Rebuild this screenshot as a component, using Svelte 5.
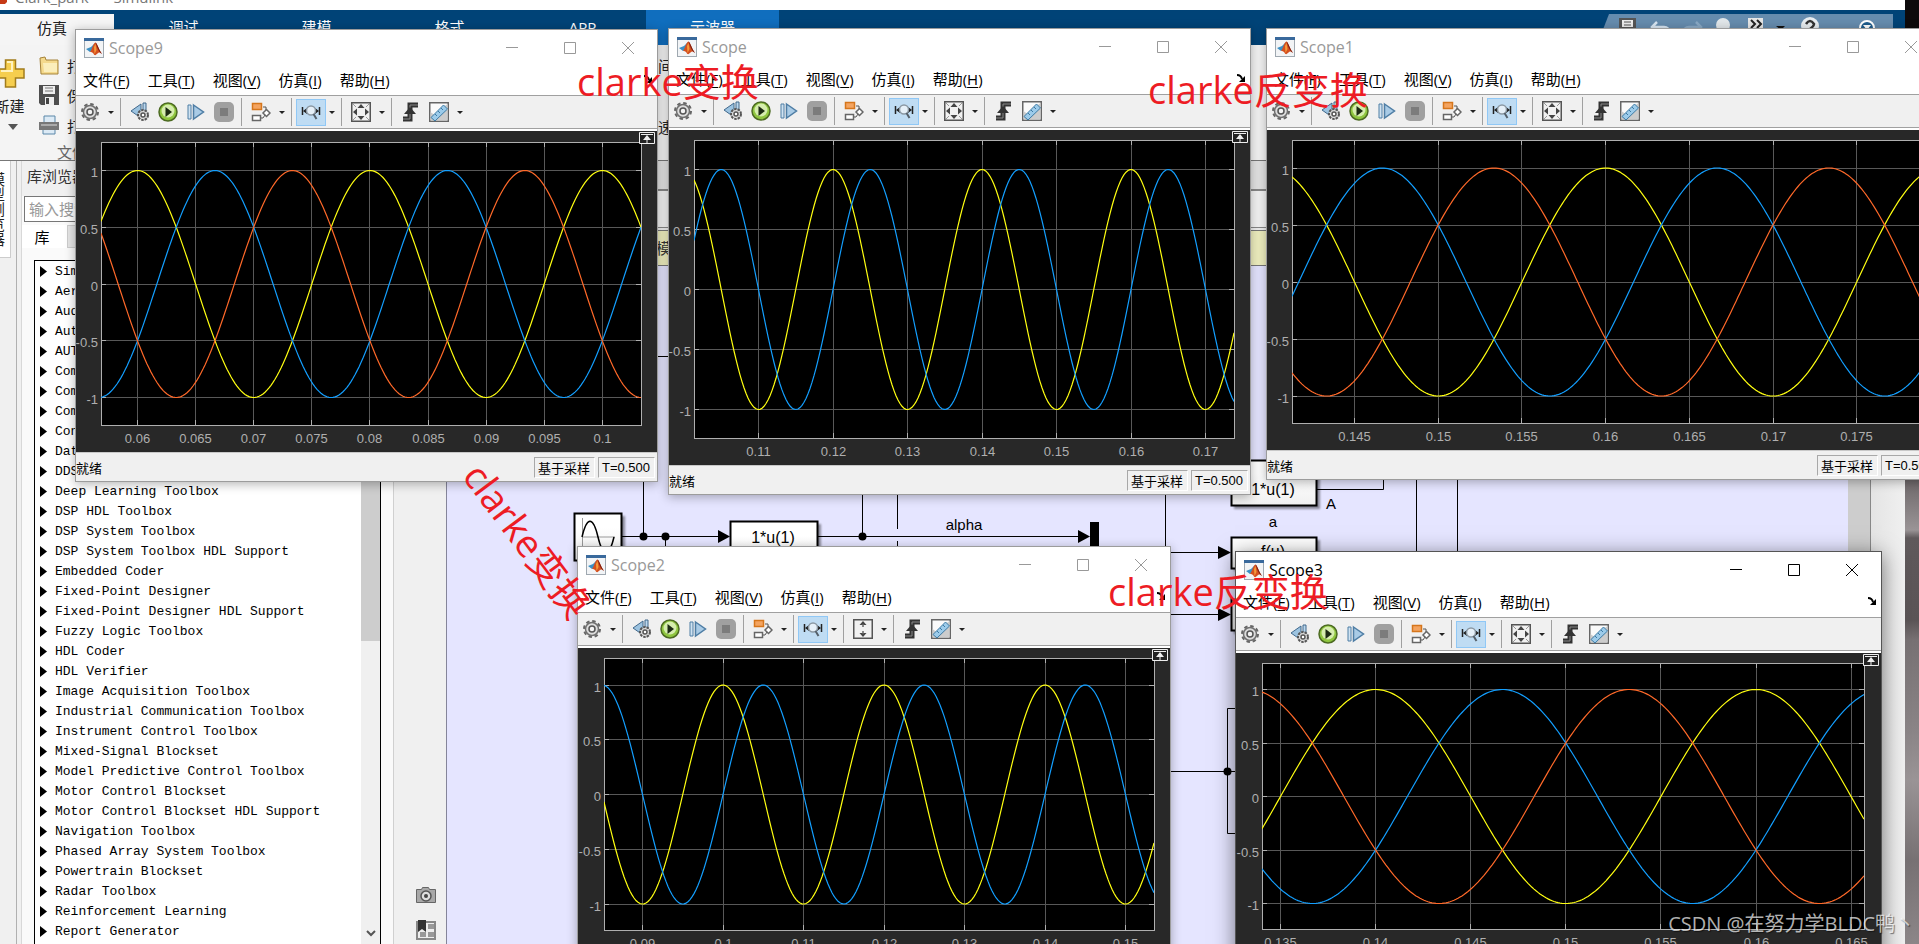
<script lang="ts">
  type Trace = { color: string; peak: number };
  type Scope = {
    name: string;
    active?: boolean;
    fitY?: boolean;
    x: number;
    y: number;
    w: number;
    h: number;
    plot: { left: number; right: number; top: number; bottom: number };
    // time of the first labelled tick, its x, the step in seconds and in px
    t0: number;
    x0: number;
    dt: number;
    dx: number;
    ticks: number;
    mid: number;
    amp: number;
    traces: Trace[];
  };

  const YELLOW = '#ffff11';
  const BLUE = '#139fff';
  const RED = '#ff6929';
  const PERIOD = 0.02;

  const threePhase: Trace[] = [
    { color: YELLOW, peak: 0 },
    { color: BLUE, peak: PERIOD / 3 },
    { color: RED, peak: (2 * PERIOD) / 3 }
  ];
  const twoPhase: Trace[] = [
    { color: YELLOW, peak: 0 },
    { color: BLUE, peak: PERIOD / 4 }
  ];

  const scopes: Scope[] = [
    {
      name: 'Scope9', x: 75, y: 29, w: 583, h: 453,
      plot: { left: 101, right: 641, top: 142, bottom: 425 },
      t0: 0.06, x0: 137.5, dt: 0.005, dx: 58.1, ticks: 9,
      mid: 284, amp: 113.5, traces: threePhase
    },
    {
      name: 'Scope', x: 668, y: 28, w: 583, h: 467,
      plot: { left: 694, right: 1234, top: 140, bottom: 438 },
      t0: 0.11, x0: 758.5, dt: 0.01, dx: 74.5, ticks: 7,
      mid: 289.5, amp: 120, traces: twoPhase
    },
    {
      name: 'Scope1', x: 1266, y: 28, w: 675, h: 452,
      plot: { left: 1292, right: 1924, top: 140, bottom: 423 },
      t0: 0.145, x0: 1354.5, dt: 0.005, dx: 83.7, ticks: 7,
      mid: 282, amp: 114, traces: threePhase
    },
    {
      name: 'Scope2', fitY: true, x: 577, y: 546, w: 594, h: 442,
      plot: { left: 604, right: 1154, top: 658, bottom: 930 },
      t0: 0.09, x0: 642.5, dt: 0.01, dx: 80.5, ticks: 7,
      mid: 794.5, amp: 109.5, traces: twoPhase
    },
    {
      name: 'Scope3', active: true, x: 1235, y: 551, w: 647, h: 435,
      plot: { left: 1262, right: 1864, top: 663, bottom: 929 },
      t0: 0.135, x0: 1280.5, dt: 0.005, dx: 95.1, ticks: 7,
      mid: 796.5, amp: 107, traces: threePhase
    }
  ];

  const menus = [
    ['文件', 'F'],
    ['工具', 'T'],
    ['视图', 'V'],
    ['仿真', 'I'],
    ['帮助', 'H']
  ];
  const levels = [1, 0.5, 0, -0.5, -1];

  const ribbonTabs = ['仿真', '调试', '建模', '格式', 'APP', '示波器'];

  const libraries = [
    'Simulink', 'Aerospace Blockset', 'Audio Toolbox', 'Automated Driving Toolbox',
    'AUTOSAR Blockset', 'Communications Toolbox', 'Communications Toolbox HDL Support',
    'Computer Vision Toolbox', 'Control System Toolbox', 'Data Acquisition Toolbox',
    'DDS Blockset', 'Deep Learning Toolbox', 'DSP HDL Toolbox', 'DSP System Toolbox',
    'DSP System Toolbox HDL Support', 'Embedded Coder', 'Fixed-Point Designer',
    'Fixed-Point Designer HDL Support', 'Fuzzy Logic Toolbox', 'HDL Coder', 'HDL Verifier',
    'Image Acquisition Toolbox', 'Industrial Communication Toolbox',
    'Instrument Control Toolbox', 'Mixed-Signal Blockset', 'Model Predictive Control Toolbox',
    'Motor Control Blockset', 'Motor Control Blockset HDL Support', 'Navigation Toolbox',
    'Phased Array System Toolbox', 'Powertrain Blockset', 'Radar Toolbox',
    'Reinforcement Learning', 'Report Generator'
  ];

  const notes = [
    { text: 'clarke变换', x: 577, y: 55, turn: 0 },
    { text: 'clarke反变换', x: 1148, y: 63, turn: 0 },
    { text: 'clarke反变换', x: 1108, y: 565, turn: 0 },
    { text: 'clarke变换', x: 437, y: 514, turn: 53 }
  ];

  function tickLabel(s: Scope, i: number) {
    return String(Number((s.t0 + i * s.dt).toFixed(4)));
  }

  function wave(s: Scope, tr: Trace) {
    let d = '';
    for (let x = s.plot.left; x <= s.plot.right; x += 2) {
      const t = s.t0 + ((x - s.x0) / s.dx) * s.dt;
      const y = s.mid - s.amp * Math.cos((2 * Math.PI * (t - tr.peak)) / PERIOD);
      d += `${d ? 'L' : 'M'}${x} ${y.toFixed(1)}`;
    }
    return d;
  }
</script>

{#snippet matlabLogo()}
  <svg class="logo" width="20" height="20" viewBox="0 0 20 20" aria-hidden="true">
    <rect x="0.5" y="0.5" width="19" height="19" fill="#f2f4f6" stroke="#9fa8b0" />
    <path d="M0 0h20v3H0z" fill="#39699c" />
    <path d="M2 11l5-2 4-4-3 8-2 1z" fill="#3b8fc4" />
    <path d="M6 14c2-2 3-9 5.500-9.500C13 5 14.500 11 18 16c-2-1.500-3-2-4.500-.5-1 1-2 2-3 1.500-1-.5-1-3-4.500-3z" fill="#d4501f" />
    <path d="M11.500 4.500C13 5 14.500 11 18 16c-3-2-4-4-6.500-11.500z" fill="#7c1d12" />
    <path d="M10 9l1.500-3 1 6-2 4z" fill="#f59a3c" />
  </svg>
{/snippet}

{#snippet icon(kind: string)}
  <svg width="20" height="20" viewBox="0 0 20 20" aria-hidden="true">
    {#if kind === 'gear'}
      <circle cx="10" cy="10" r="8" fill="none" stroke="#666" stroke-width="2" stroke-dasharray="3.500 2.780" />
      <circle cx="10" cy="10" r="6.500" fill="#ddd" stroke="#707070" stroke-width="1.500" />
      <circle cx="10" cy="10" r="3" fill="#f4f4f4" stroke="#555" stroke-width="1.500" />
    {:else if kind === 'simset'}
      <path d="M1 9L11 2v14z" fill="#9cc3e0" stroke="#41698c" />
      <path d="M13 1h3v10h-3z" fill="#bcd8ee" stroke="#41698c" />
      <circle cx="13" cy="13" r="5" fill="#ddd" stroke="#555" stroke-width="2" stroke-dasharray="2.500 1" />
      <circle cx="13" cy="13" r="2" fill="#fff" stroke="#555" stroke-width="1.500" />
    {:else if kind === 'play'}
      <circle cx="10" cy="10" r="9" fill="#8fc63f" stroke="#4c6a22" stroke-width="1.500" />
      <circle cx="10" cy="9" r="6.500" fill="#d6edae" />
      <path d="M7.500 5l6.500 5-6.500 5z" fill="#1d2b14" />
    {:else if kind === 'step'}
      <path d="M2 3h3v14H2z" fill="#cfe2f1" stroke="#4f7ea5" />
      <path d="M7.500 3l10 7-10 7z" fill="#a9cbe6" stroke="#4f7ea5" stroke-width="1.500" />
    {:else if kind === 'stop'}
      <rect width="20" height="20" rx="5" fill="#a0a0a0" />
      <rect x="6" y="6" width="8" height="8" fill="#7c7c7c" />
    {:else if kind === 'blocks'}
      <path d="M12 5h3v5M9 16h3l2-3" fill="none" stroke="#555" />
      <rect x="1.500" y="1.500" width="9" height="6" fill="#f4a460" stroke="#d5761c" stroke-width="1.500" />
      <rect x="1.500" y="13.500" width="8" height="5" fill="#fff" stroke="#666" stroke-width="1.500" />
      <path d="M15.500 7.500l3.500 3.500-3.500 3.500-3.500-3.500z" fill="#fff" stroke="#666" stroke-width="1.500" />
    {:else if kind === 'zoom'}
      <path d="M1.500 5v8M18.500 5v8" stroke="#222" stroke-width="1.500" />
      <path d="M2 9l4-3v6zM18 9l-4-3v6z" fill="#222" />
      <circle cx="10" cy="8.500" r="4.500" fill="#e6f0f8" stroke="#8b98a3" stroke-width="1.500" />
      <path d="M12.500 12l3 5" stroke="#55606a" stroke-width="2" />
    {:else if kind === 'fit' || kind === 'fitY'}
      <rect x="0.750" y="0.750" width="18.500" height="18.500" fill="#f1f1f1" stroke="#555" stroke-width="1.500" />
      <path d="M10 2l3.500 4h-7zM10 18l3.500-4h-7z" fill="#444" />
      {#if kind === 'fit'}
        <path d="M2 10l4-3.500v7zM18 10l-4-3.500v7z" fill="#444" />
        <path d="M2 2l3 3M18 2l-3 3M2 18l3-3M18 18l-3-3" stroke="#999" />
      {:else}
        <path d="M10 5v3M10 12v3" stroke="#666" stroke-width="1.500" />
      {/if}
    {:else if kind === 'trigger'}
      <path d="M2 17h7V3h8" fill="none" stroke="#333" stroke-width="5" />
      <path d="M2 17h7V3h8" fill="none" stroke="#888" />
      <path d="M9 5l6 7H3z" fill="#333" />
    {:else if kind === 'ruler'}
      <rect x="0.750" y="0.750" width="18.500" height="18.500" fill="#fafafa" stroke="#666" stroke-width="1.500" />
      <path d="M1.500 18.500V10l4 3 6-6 7-5v16.500z" fill="#ccc" />
      <path d="M2 15.500L14.500 3l4 4L6 19z" fill="#9ccbea" stroke="#3d7ba5" />
      <path d="M6 12l2 2M9 9l2 2M12 6l2 2" stroke="#3d7ba5" />
    {/if}
  </svg>
{/snippet}

{#snippet tool(kind: string, label: string, caret: boolean)}
  <button class="tool" class:on={kind === 'zoom'} aria-label={label}>{@render icon(kind)}</button>
  {#if caret}
    <button class="caret" aria-label="{label} ▾">
      <svg width="6" height="3" viewBox="0 0 6 3"><path d="M0 0h6L3 3z" fill="#222" /></svg>
    </button>
  {/if}
{/snippet}

<div class="desktop">
  <main class="simulink">
    <header class="titlebar">
      <svg width="7" height="14" viewBox="0 0 7 14"><path d="M0 0h7v12l-2 2H0z" fill="#c63a16" /></svg>
      <span>Clark_park * - Simulink</span>
      <svg class="frame-btns" width="76" height="14" viewBox="0 0 76 14">
        <path d="M1 2.500h9V0M60 2.500l2-2M72 2.500l-2-2M1 2V0" fill="none" stroke="#444" />
      </svg>
    </header>

    <nav class="tabs">
      {#each ribbonTabs as tab, i}
        <button class="tab" class:current={i === 0} class:context={i === 5}>{tab}</button>
      {/each}
      <svg class="quick" width="296" height="31" viewBox="0 0 296 31" aria-hidden="true">
        <path d="M12 0h284v31H0z" fill="#668cae" />
        <path d="M22 4h17v20H22z" fill="#555" /><path d="M25 6h11v7H25z" fill="#eee" /><path d="M27 8h7M27 11h7" stroke="#555" />
        <path d="M55 13h12q5 0 5 6M60 8l-5 5 5 5" fill="none" stroke="#d9e6f2" stroke-width="2.500" />
        <path d="M104 13H92q-5 0-5 6M99 8l5 5-5 5" fill="none" stroke="#8aa9c5" stroke-width="2.500" />
        <circle cx="126" cy="11" r="7" fill="#e2e7ea" />
        <path d="M151 4h15v20h-15z" fill="#e6e6e6" /><path d="M154 6l4 4-4 4M160 6l4 4-4 4" fill="none" stroke="#222" stroke-width="2" />
        <path d="M179 12h9l-4 4zM234 14h9l-4 4z" fill="#111" />
        <circle cx="213" cy="12" r="9" fill="#e8edf0" /><path d="M209 10q4-6 8 0q0 2-4 5" fill="none" stroke="#333" stroke-width="2.500" />
        <circle cx="270" cy="14" r="7" fill="#1f5c8c" stroke="#fff" stroke-width="2" /><path d="M266 11h8l-4 5z" fill="#fff" />
      </svg>
    </nav>

    <section class="ribbon">
      <div class="new-col">
        <svg width="25" height="29" viewBox="0 0 25 29" aria-hidden="true">
          <path d="M5.500 1h10v9H24v9h-8.500v9h-10v-9H-4v-9h9.500z" fill="#f6ce4e" stroke="#a17c1c" stroke-width="1.500" />
          <path d="M7 3h5v9H1" fill="none" stroke="#fff3c0" stroke-width="2" />
        </svg>
        <span>新建</span>
        <svg width="10" height="6" viewBox="0 0 10 6"><path d="M0 0h10L5 6z" fill="#555" /></svg>
      </div>
      <div class="file-col">
        <button class="file-btn">
          <svg width="20" height="20" viewBox="0 0 20 20"><path d="M1 3l5-1 1 3h12v14H2z" fill="#f4d98c" stroke="#a5833a" /><path d="M4 8h14v9H5z" fill="#fbeebb" /></svg>
          打开
        </button>
        <button class="file-btn">
          <svg width="20" height="20" viewBox="0 0 20 20"><path d="M0 0h20v20H2l-2-2z" fill="#4e4e4e" /><path d="M4 1h12v8H4zM6 12h9v8H6z" fill="#eee" /><path d="M6 3h8M6 6h8" stroke="#777" /><path d="M7 13h3v6H7z" fill="#444" /></svg>
          保存
        </button>
        <button class="file-btn">
          <svg width="20" height="20" viewBox="0 0 20 20"><path d="M5 1h11v7H5zM4 14h12v5H4z" fill="#dceaf5" stroke="#5b87a8" /><path d="M0 7h20v8H0z" fill="#777" /><path d="M2 9h16v2H2z" fill="#aaa" /></svg>
          打印
        </button>
        <span class="group-name">文件</span>
      </div>
      <div class="hidden-col"><span>间</span><span>速</span></div>
    </section>

    <div class="body">
      <div class="rail"><span>模型浏览器</span></div>

      <aside class="library">
        <h2>库浏览器</h2>
        <input type="search" placeholder="输入搜索词" aria-label="输入搜索词" />
        <div class="lib-tabs"><button class="lib-tab">库</button><button class="lib-tab other" aria-label="搜索结果"></button></div>
        <div class="tree-wrap">
          <ul class="tree">
            {#each libraries as lib}
              <li><button><svg width="7" height="11" viewBox="0 0 7 11"><path d="M0 0l7 5.500L0 11z" /></svg>{lib}</button></li>
            {/each}
          </ul>
          <div class="scroll">
            <div class="thumb"></div>
            <svg width="10" height="7" viewBox="0 0 10 7"><path d="M1 1l4 4 4-4" fill="none" stroke="#555" stroke-width="2" /></svg>
          </div>
        </div>
      </aside>

      <div class="palette">
        <button aria-label="截图">
          <svg width="20" height="16" viewBox="0 0 20 16"><path d="M0.500 2.500h5l1-2h6l1 2h6v13h-19z" fill="#a8a8a8" stroke="#666" /><circle cx="10" cy="9" r="5" fill="#ddd" stroke="#555" stroke-width="1.500" /><circle cx="10" cy="9" r="2" fill="#444" /></svg>
        </button>
        <button aria-label="书签">
          <svg width="20" height="20" viewBox="0 0 20 20"><rect x="1" y="2" width="18" height="17" fill="#eee" stroke="#888" stroke-width="2" /><path d="M12 4h6v5h-6zM12 12h6v5h-6zM4 12h6v5H4z" fill="#999" /><path d="M2 0h8v12l-4-3-4 3z" fill="#333" /></svg>
        </button>
      </div>

      <section class="editor">
        <div class="crumbs"></div>
        <div class="notice">模</div>
        <div class="sheet">
          <div class="canvas">
            <!-- the block diagram, in screen coordinates from the sheet's corner -->
            <svg width="1400" height="678" viewBox="447 266 1400 678">
              <defs>
                <linearGradient id="block" x1="0" y1="0" x2="0" y2="1">
                  <stop offset="0.3" stop-color="#fff" />
                  <stop offset="1" stop-color="#f0f0f0" />
                </linearGradient>
              </defs>
              <g class="shadow">
                <rect x="577" y="516" width="48" height="47" />
                <rect x="733" y="524" width="88" height="47" />
                <rect x="1234" y="464" width="86" height="45" />
                <rect x="1234" y="540" width="86" height="31" />
                <rect x="1234" y="603" width="86" height="31" />
              </g>
              <g class="wire">
                <path d="M621 536.500H720M817 536.500H1080M643.500 380V536M665.500 536V580M862.500 380V536M897.500 380V529M897.500 541V580M1165.500 380V580" />
                <path d="M1165 552.500H1222M1165 614.500H1222M1317 489.500H1383.500V400M1416.500 400V600M1457.500 400V600" />
                <path d="M1165 771.500H1240M1240 708.500H1227.500V833.500H1240M650 356.500H700" />
              </g>
              <g class="block">
                <rect x="574.500" y="513.500" width="47" height="47" />
                <rect x="730.500" y="521.500" width="87" height="47" />
                <rect x="1231.500" y="460.500" width="85" height="45" />
                <rect x="1231.500" y="537.500" width="85" height="31" />
                <rect x="1231.500" y="599.500" width="85" height="31" />
              </g>
              <path d="M582.500 518V556M582 537H615" stroke="#999" />
              <path d="M582 537C587 516 593 516 598 537S609 558 614 537" fill="none" stroke="#000" stroke-width="1.500" />
              <path d="M718 530l12 6.500-12 6.500zM1078 530l12 6.500-12 6.500zM1218 546l13 6.500-13 6.500zM1218 608l13 6.500-13 6.500zM1090 522h9v50h-9z" />
              <circle cx="643.500" cy="536.500" r="4" /><circle cx="665.500" cy="536.500" r="4" />
              <circle cx="862.500" cy="536.500" r="4" /><circle cx="1227.500" cy="771.500" r="4" />
              <text x="773" y="543" font-size="16">1*u(1)</text>
              <text x="1273" y="495" font-size="16">1*u(1)</text>
              <text x="1273" y="557" font-size="16">f(u)</text>
              <text x="964" y="530" font-size="15">alpha</text>
              <text x="1331" y="509" font-size="15">A</text>
              <text x="1273" y="527" font-size="15">a</text>
            </svg>
          </div>
          <div class="canvas-scroll"></div>
        </div>
      </section>
      <div class="edge"></div>
    </div>
  </main>
  <div class="wallpaper"></div>

  {#each scopes as s}
    <section
      class="window"
      class:active={s.active}
      style="left: {s.x}px; top: {s.y}px; width: {s.w}px; height: {s.h}px"
    >
      <header class="caption">
        {@render matlabLogo()}
        <h1>{s.name}</h1>
        <button class="frame" aria-label="最小化"><svg width="14" height="14" viewBox="0 0 14 14"><path d="M1 6.500h12" /></svg></button>
        <button class="frame" aria-label="最大化"><svg width="14" height="14" viewBox="0 0 14 14"><path d="M1.500 1.500h11v11h-11z" /></svg></button>
        <button class="frame" aria-label="关闭"><svg width="14" height="14" viewBox="0 0 14 14"><path d="M1 1l12 12M13 1L1 13" /></svg></button>
      </header>
      <nav class="menu">
        {#each menus as [label, key]}
          <button>{label}(<u>{key}</u>)</button>
        {/each}
        <button class="dock" aria-label="停靠">
          <svg width="8" height="8" viewBox="0 0 8 8"><path d="M0 1q4 0 5 4" fill="none" stroke="#000" stroke-width="2" /><path d="M8 2v6H2z" /></svg>
        </button>
      </nav>
      <div class="toolbar">
        <div class="group">{@render tool('gear', '配置属性', true)}</div>
        <div class="group run">
          {@render tool('simset', '步退选项', false)}
          {@render tool('play', '运行', false)}
          {@render tool('step', '步进', false)}
          {@render tool('stop', '停止', false)}
        </div>
        <div class="group">{@render tool('blocks', '突出显示模块', true)}</div>
        <div class="group">{@render tool('zoom', '缩放', true)}</div>
        <div class="group">{@render tool(s.fitY ? 'fitY' : 'fit', '缩放坐标区', true)}</div>
        <div class="group last">
          {@render tool('trigger', '触发器', false)}
          {@render tool('ruler', '测量', true)}
        </div>
      </div>
      <div class="pane">
        <svg class="plot" viewBox="{s.x + 1} {s.y + 102} {s.w - 2} {s.h - 133}" width={s.w - 2} height={s.h - 133}>
          <clipPath id="clip-{s.name}">
            <rect x={s.plot.left} y={s.plot.top} width={s.plot.right - s.plot.left} height={s.plot.bottom - s.plot.top} />
          </clipPath>
          <rect x={s.plot.left} y={s.plot.top} width={s.plot.right - s.plot.left} height={s.plot.bottom - s.plot.top} fill="#000" />
          {#each { length: s.ticks } as _, i}
            {@const gx = Math.floor(s.x0 + i * s.dx) + 0.5}
            <path class="grid" d="M{gx} {s.plot.top}V{s.plot.bottom}" />
            <path class="tick" d="M{gx} {s.plot.top}v5M{gx} {s.plot.bottom}v-5" />
            <text x={gx} y={s.plot.bottom + 18} text-anchor="middle">{tickLabel(s, i)}</text>
          {/each}
          {#each levels as v}
            {@const gy = Math.floor(s.mid - v * s.amp) + 0.5}
            <path class="grid" d="M{s.plot.left} {gy}H{s.plot.right}" />
            <path class="tick" d="M{s.plot.left} {gy}h5M{s.plot.right} {gy}h-5" />
            <text x={s.plot.left - 3} y={gy + 6} text-anchor="end">{v}</text>
          {/each}
          <rect class="axes" x={s.plot.left + 0.5} y={s.plot.top + 0.5} width={s.plot.right - s.plot.left} height={s.plot.bottom - s.plot.top} />
          <g clip-path="url(#clip-{s.name})">
            {#each s.traces as tr}
              <path class="trace" d={wave(s, tr)} stroke={tr.color} />
            {/each}
          </g>
        </svg>
        <button class="expand" aria-label="最大化坐标区">
          <svg width="16" height="12" viewBox="0 0 16 12">
            <path d="M0.500 0.500h15v11H0.500z" fill="#222" stroke="#eee" />
            <path d="M2 2.500h12M8 11V5" stroke="#eee" /><path d="M8 3l4 5H4z" fill="#eee" />
          </svg>
        </button>
      </div>
      <footer class="status">
        <span class="ready">就绪</span>
        <span class="cell mode">基于采样</span>
        <span class="cell time">T=0.500</span>
      </footer>
    </section>
  {/each}

  {#each notes as n}
    <div class="note" style="left: {n.x}px; top: {n.y}px; transform: rotate({n.turn}deg)">{n.text}</div>
  {/each}
  <div class="watermark">CSDN @在努力学BLDC鸭丶</div>
</div>

<style>
  :global(body) {
    overflow: hidden;
    font-family: "Open Sans", "Noto Sans CJK SC", sans-serif;
    font-size: 15px;
    color: #000;
  }
  button {
    padding: 0;
    border: 0;
    background: none;
    font: inherit;
    color: inherit;
  }
  svg { display: block; flex: none; }
  h1, h2, ul { margin: 0; padding: 0; font-weight: normal; }

  .desktop {
    position: relative;
    display: flex;
    height: 100vh;
    overflow: hidden;
  }

  /* Main window */
  .simulink {
    flex: 1;
    min-width: 0;
    display: flex;
    flex-direction: column;
    background: #f0f0f0;
  }
  .titlebar {
    display: flex;
    align-items: center;
    gap: 8px;
    height: 26px;
    margin-top: -20px;
    padding-top: 4px;
    background: #fff;
    color: #777;
    font-size: 15px;
  }
  .frame-btns { margin: 6px 22px 0 auto; }
  .tabs {
    display: flex;
    align-items: flex-end;
    height: 35px;
    background: #004377;
    color: #fff;
  }
  .tab {
    width: 133px;
    height: 31px;
    padding: 0 0 6px 6px;
  }
  .tab.current {
    width: 114px;
    padding: 0 10px 4px 0;
    background: #f5f5f5;
    color: #222;
  }
  .tab.context {
    height: 35px;
    padding: 0 0 2px;
    background: #106ebe;
  }
  .quick { margin-left: auto; margin-right: 12px; }
  .ribbon {
    display: flex;
    height: 115px;
    background: #f4f4f4;
    border-bottom: 1px solid #777;
    color: #222;
  }
  .new-col {
    display: flex;
    flex-direction: column;
    align-items: center;
    width: 25px;
    gap: 8px;
    padding-top: 14px;
    line-height: 20px;
    white-space: nowrap;
  }
  .new-col span { margin-left: -6px; }
  .file-col {
    display: flex;
    flex-direction: column;
    gap: 10px;
    width: 86px;
    padding: 10px 0 0 14px;
  }
  .file-btn {
    display: flex;
    align-items: center;
    gap: 8px;
    height: 20px;
    white-space: nowrap;
  }
  .group-name { margin-left: 18px; line-height: 14px; color: #666; }
  .hidden-col {
    display: flex;
    flex-direction: column;
    gap: 40px;
    margin-left: 533px;
    padding-top: 10px;
  }
  .body {
    flex: 1;
    min-height: 0;
    display: flex;
  }
  .rail {
    width: 16px;
    border-right: 1px solid #b0b0b0;
    margin-right: 4px;
  }
  .rail span {
    display: block;
    width: 5px;
    height: 96px;
    padding-right: 5px;
    writing-mode: vertical-rl;
    background: #fff;
    border-right: 1px solid #ccc;
    border-bottom: 1px solid #ccc;
    line-height: 16px;
    text-align: center;
    color: #222;
  }
  .library {
    display: flex;
    flex-direction: column;
    width: 371px;
    background: #fafafa;
    border-left: 1px solid #d8d8d8;
    border-right: 1px solid #d0d0d0;
  }
  .library h2 {
    padding: 2px 5px 6px;
    height: 27px;
    line-height: 26px;
    font-size: 15px;
    background: #f0f0f0;
    color: #333;
  }
  .library input {
    height: 26px;
    margin: 0 2px;
    padding: 0 4px;
    border: 1px solid #777;
    outline: 0;
    background: #fff;
    font: inherit;
    font-size: 15px;
  }
  .library input::placeholder { color: #999; }
  .lib-tabs { display: flex; height: 23px; margin-top: 3px; background: #f0f0f0; }
  .lib-tab { width: 45px; background: #fff; padding-right: 5px; }
  .lib-tab.other { background: #e6e6e6; border: 1px solid #ccc; }
  .tree-wrap {
    flex: 1;
    min-height: 0;
    display: flex;
    margin: 12px 12px 0 12px;
    border: 1px solid #000;
    border-bottom: 0;
    background: #fff;
  }
  .tree {
    flex: 1;
    list-style: none;
    overflow: hidden;
    font-family: "Liberation Mono", monospace;
    font-size: 13px;
  }
  .tree button {
    display: flex;
    align-items: center;
    gap: 8px;
    height: 20px;
    padding-left: 5px;
    white-space: nowrap;
  }
  .scroll {
    display: flex;
    flex-direction: column;
    align-items: center;
    justify-content: space-between;
    width: 19px;
    padding-bottom: 7px;
    background: #f0f0f0;
  }
  .thumb { width: 19px; height: 380px; background: #cdcdcd; }
  .palette {
    display: flex;
    flex-direction: column;
    align-items: center;
    justify-content: flex-end;
    gap: 17px;
    width: 53px;
    padding: 0 0 4px 12px;
    border-right: 1px solid #85859a;
    box-sizing: border-box;
  }
  .editor {
    flex: 1;
    min-width: 0;
    display: flex;
    flex-direction: column;
  }
  .crumbs {
    height: 69px;
    background: linear-gradient(#e4e4e4 28px, #888 28px 30px, #f4f4f4 30px 66px, #888 66px 67px, #f0f0f0 67px);
  }
  .notice {
    height: 36px;
    padding-left: 209px;
    line-height: 34px;
    background: #f0f0c0;
    border-top: 1px solid #777;
    border-bottom: 1px solid #777;
    box-sizing: border-box;
    color: #333;
  }
  .sheet { flex: 1; min-height: 0; display: flex; }
  .canvas {
    flex: 1;
    min-width: 0;
    overflow: hidden;
    background: #e5e5ff;
    font-family: "Liberation Sans", Arial, sans-serif;
  }
  .canvas text { text-anchor: middle; }
  .canvas-scroll { width: 22px; background: #cdcdcd; }
  .shadow { fill: #000; opacity: 0.4; filter: blur(1px); }
  .wire { fill: none; stroke: #000; }
  .block { fill: url(#block); stroke: #000; stroke-width: 2; }
  .edge {
    width: 34px;
    border-left: 1px solid #888;
    background: linear-gradient(90deg, #e4e4e4, #f0f0f0);
  }
  .wallpaper {
    width: 14px;
    background: linear-gradient(#0d0a0b 28px, #6d6769 480px, #9a9496 530px, #5f595b 538px, #5a5456 620px, #777173 640px, #8a8486 730px, #9a9496 780px, #777173 860px, #8c8688);
  }

  /* Scope windows */
  .window {
    position: absolute;
    display: flex;
    flex-direction: column;
    box-sizing: border-box;
    border: 1px solid #9c9c9c;
    background: #fff;
    box-shadow: 0 2px 10px rgba(0, 0, 0, 0.3);
  }
  .window.active {
    border-color: #555;
    box-shadow: 0 4px 20px rgba(0, 0, 0, 0.5);
  }
  .caption {
    display: flex;
    align-items: center;
    height: 35px;
    padding-left: 8px;
    color: #999;
  }
  .caption h1 {
    flex: 1;
    margin-left: 5px;
    font-size: 16px;
  }
  .frame {
    display: flex;
    align-items: center;
    justify-content: center;
    width: 58px;
    height: 35px;
  }
  .frame path { fill: none; stroke: currentColor; }
  .active .caption { color: #000; }
  .menu {
    display: flex;
    align-items: center;
    gap: 18px;
    height: 28px;
    padding: 0 5px 2px 7px;
    border-bottom: 1px solid #a0a0a0;
  }
  .menu u { text-underline-offset: 2px; }
  .menu .dock { margin-left: auto; }
  .toolbar {
    display: flex;
    align-items: center;
    height: 32px;
    padding-left: 4px;
    background: #f0f0f0;
    border-bottom: 1px solid #a0a0a0;
  }
  .group {
    display: flex;
    align-items: center;
    gap: 8px;
    height: 28px;
    padding-right: 3px;
    border-right: 1px solid #a0a0a0;
  }
  .group + .group { padding-left: 9px; }
  .group.run { padding-right: 7px; }
  .group.last { border-right: 0; }
  .tool.on {
    display: flex;
    align-items: center;
    height: 27px;
    margin: 0 -5px;
    padding: 4px;
    background: #bfdcf3;
    border: 1px solid #90c8f6;
    box-sizing: border-box;
  }
  .caret {
    display: flex;
    justify-content: center;
    width: 12px;
    margin-left: -3px;
  }
  .pane {
    position: relative;
    flex: 1;
    min-height: 0;
    margin-top: 2px;
    background: #282828;
  }
  .plot text {
    fill: #afafaf;
    font-family: "Liberation Sans", Arial, sans-serif;
    font-size: 13px;
  }
  .grid { stroke: #585858; }
  .tick { stroke: #afafaf; }
  .axes { fill: none; stroke: #afafaf; }
  .trace { fill: none; stroke-width: 1.2; }
  .expand {
    position: absolute;
    top: 1px;
    right: 2px;
  }
  .status {
    display: flex;
    align-items: center;
    gap: 3px;
    height: 28px;
    padding: 0 2px 0 0;
    border-top: 1px solid #c8c8c8;
    background: #f0f0f0;
    font-size: 13px;
  }
  .ready { margin-right: auto; }
  .cell {
    height: 21px;
    padding-left: 3px;
    border: 1px solid #a8a8a8;
    border-right-color: #fff;
    border-bottom-color: #fff;
    line-height: 20px;
    box-sizing: border-box;
  }
  .mode { width: 61px; }
  .time {
    width: 57px;
    font-family: "Liberation Sans", Arial, sans-serif;
  }

  /* Annotations drawn over the windows */
  .note {
    position: absolute;
    line-height: 52px;
    font-size: 38px;
    color: #ed1c24;
    white-space: nowrap;
  }
  .watermark {
    position: absolute;
    right: 4px;
    bottom: 4px;
    line-height: 32px;
    font-size: 20px;
    color: rgba(255, 255, 255, 0.7);
    text-shadow: 1px 1px 1px rgba(0, 0, 0, 0.5);
    white-space: nowrap;
  }
</style>
